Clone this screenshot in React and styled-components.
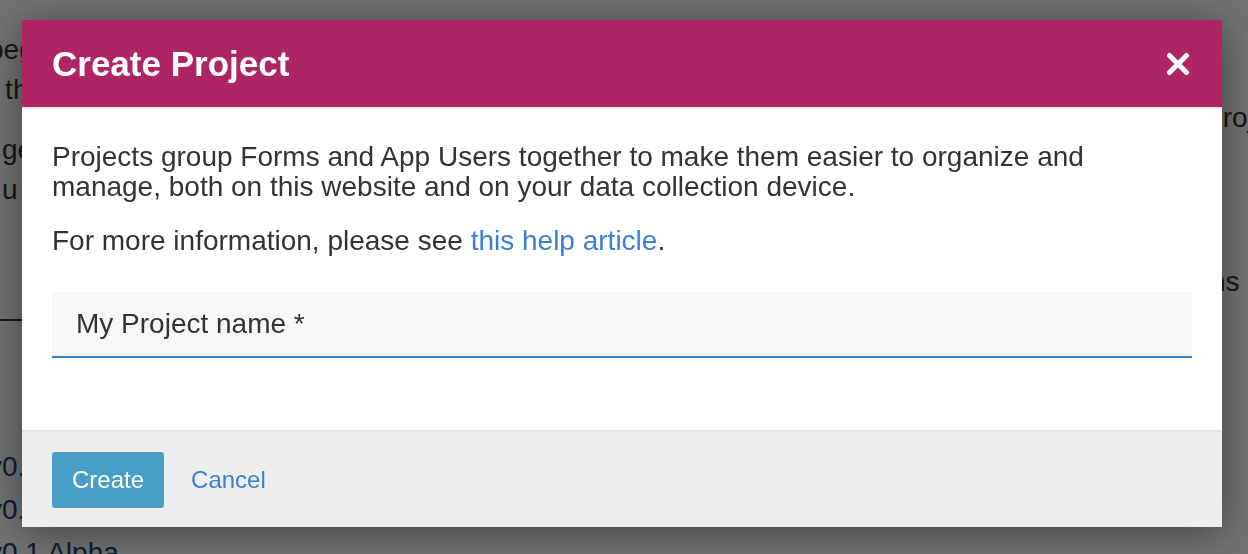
import React from 'react';
import styled, { createGlobalStyle } from 'styled-components';

const GlobalStyle = createGlobalStyle`
  html, body {
    margin: 0;
    padding: 0;
    height: 100%;
    overflow: hidden;
    background: #fff;
    font-family: "Liberation Sans", Arial, Helvetica, sans-serif;
    color: #333;
  }
  #root {
    height: 100%;
  }
`;

const Page = styled.div`
  display: flex;
  justify-content: space-between;
  height: 100%;
  font-size: 28px;
  line-height: 40px;
  color: #333;
`;

const PageColumn = styled.div`
  display: flex;
  flex-direction: column;
  width: ${(props) => (props.left ? '400px' : '44px')};
  margin-left: ${(props) => (props.left ? '-12px' : '0')};
  padding-top: ${(props) => (props.left ? '30px' : '98px')};
  white-space: nowrap;
`;

const PageLine = styled.div`
  margin-bottom: ${(props) => props.gap || '0px'};
  padding-left: ${(props) => props.indent || '0px'};
`;

const PageRule = styled.hr`
  border: none;
  border-top: 2px solid #333;
  margin: 109px 0 124px;
`;

const PageLink = styled.div`
  color: #1f3f66;
  line-height: 43px;
`;

const Overlay = styled.div`
  position: fixed;
  inset: 0;
  background: rgba(0, 0, 0, 0.55);
  padding: 20px 0 0 22px;
`;

const Modal = styled.div`
  width: 1200px;
  background: #fff;
  box-shadow: 0 5px 40px rgba(0, 0, 0, 0.45);
`;

const Header = styled.div`
  display: flex;
  align-items: center;
  justify-content: space-between;
  height: 87px;
  padding: 0 32px 0 30px;
  background: #ae2566;
  border-bottom: 2px solid #e5e5e5;
`;

const Title = styled.h1`
  margin: 0;
  font-size: 35px;
  font-weight: bold;
  color: #fff;
`;

const CloseButton = styled.button`
  display: flex;
  padding: 0;
  border: none;
  background: none;
  cursor: pointer;
`;

const Body = styled.div`
  padding: 33px 30px 72px;
`;

const Paragraph = styled.p`
  margin: 0 0 24px;
  font-size: 28px;
  line-height: 30px;
  color: #333;
`;

const Link = styled.a`
  color: #3b7fd3;
  text-decoration: none;
  cursor: pointer;
`;

const Field = styled.div`
  margin-top: 36px;
`;

const Input = styled.input`
  box-sizing: border-box;
  width: 100%;
  height: 66px;
  padding: 0 24px;
  border: none;
  border-bottom: 2px solid #3b7fd3;
  background: #f7f7f7;
  font-family: inherit;
  font-size: 28px;
  color: #333;
  outline: none;

  &::placeholder {
    color: #333;
    opacity: 1;
  }
`;

const Footer = styled.div`
  display: flex;
  align-items: center;
  gap: 27px;
  padding: 20px 30px 19px;
  background: #eee;
  border-top: 2px solid #e3e3e3;
`;

const PrimaryButton = styled.button`
  height: 56px;
  padding: 0 20px;
  border: none;
  border-radius: 3px;
  background: #479fc8;
  color: #fff;
  font-family: inherit;
  font-size: 24px;
  cursor: pointer;
`;

const TextButton = styled.button`
  padding: 0;
  border: none;
  background: none;
  color: #3b7fd3;
  font-family: inherit;
  font-size: 24px;
  cursor: pointer;
`;

const CloseIcon = () => (
  <svg width="24" height="24" viewBox="0 0 24 24">
    <path
      d="M3.5 3.5 L20.5 20.5 M20.5 3.5 L3.5 20.5"
      stroke="#fff"
      strokeWidth="5"
      strokeLinecap="round"
    />
  </svg>
);

const App = () => {
  return (
    <>
      <GlobalStyle />
      <Page>
        <PageColumn left>
          <PageLine>begin to create</PageLine>
          <PageLine gap="20px">r the forms</PageLine>
          <PageLine>l get your</PageLine>
          <PageLine>l u can</PageLine>
          <PageRule />
          <PageLink>v0.3 Beta</PageLink>
          <PageLink>v0.2 Beta</PageLink>
          <PageLink>v0.1 Alpha</PageLink>
        </PageColumn>
        <PageColumn>
          <PageLine gap="124px">Projects</PageLine>
          <PageLine indent="6px">ns</PageLine>
        </PageColumn>
      </Page>

      <Overlay>
        <Modal>
          <Header>
            <Title>Create Project</Title>
            <CloseButton aria-label="Close">
              <CloseIcon />
            </CloseButton>
          </Header>
          <Body>
            <Paragraph>
              Projects group Forms and App Users together to make them easier to organize and
              manage, both on this website and on your data collection device.
            </Paragraph>
            <Paragraph>
              For more information, please see <Link>this help article</Link>.
            </Paragraph>
            <Field>
              <Input placeholder="My Project name *" />
            </Field>
          </Body>
          <Footer>
            <PrimaryButton>Create</PrimaryButton>
            <TextButton>Cancel</TextButton>
          </Footer>
        </Modal>
      </Overlay>
    </>
  );
};

export default App;
